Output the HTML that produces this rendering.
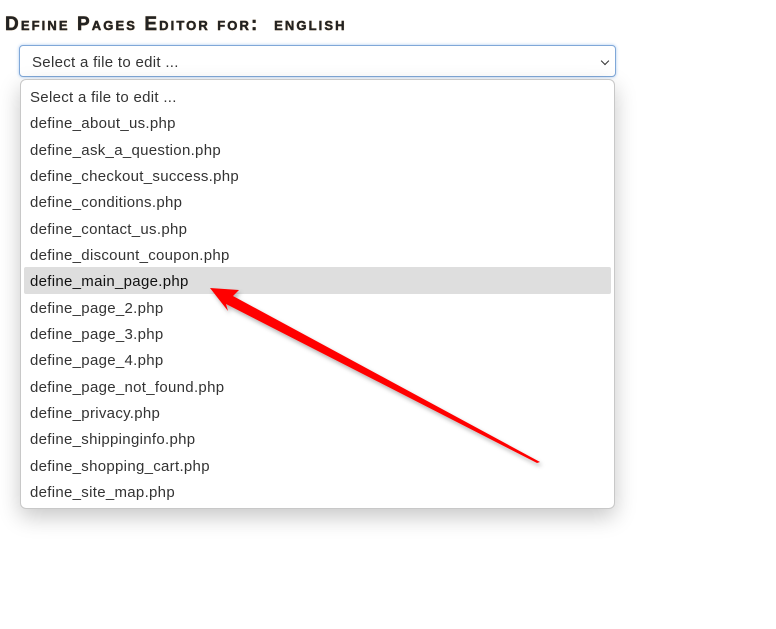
<!DOCTYPE html>
<html><head><style>
body{margin:0;width:776px;height:629px;background:#fff;position:relative;font-family:"Liberation Sans",sans-serif;overflow:hidden}
h1{position:absolute;left:5px;top:14px;margin:0;font-size:19px;font-weight:bold;font-variant:small-caps;letter-spacing:2.1px;color:#222;text-shadow:0 0 1px #e8a040;-webkit-text-stroke:0.4px #222}
.sel{position:absolute;left:19px;top:45px;height:32px;border:1px solid #80a8d8;border-radius:4px;box-shadow:0 0 3px #a8c8f0;background:#fff;font-size:15px;color:#333;line-height:33px;padding-left:12px;box-sizing:border-box;width:597px;letter-spacing:.3px}
.sel:after{content:"";position:absolute;right:7px;top:12px;width:5px;height:5px;border-right:1.5px solid #333;border-bottom:1.5px solid #333;transform:rotate(45deg)}
.list{position:absolute;left:20px;top:79px;width:595px;height:430px;border:1px solid #c8c8c8;border-radius:6px;box-sizing:border-box;background:#fff;box-shadow:0 8px 22px rgba(0,0,0,.22)}
.it{position:absolute;left:9px;font-size:15px;color:#333;height:26px;line-height:28px;letter-spacing:.3px}
.hl{position:absolute;left:3px;top:187px;width:587px;height:27px;background:#dedede;border-radius:2px}
</style></head><body>
<h1>Define Pages Editor for:&nbsp; english</h1>
<div class="sel">Select a file to edit ...</div>
<div class="list">
<div class="hl"></div>
<div class="it" style="top:4px">Select a file to edit ...</div>
<div class="it" style="top:30px">define_about_us.php</div>
<div class="it" style="top:57px">define_ask_a_question.php</div>
<div class="it" style="top:83px">define_checkout_success.php</div>
<div class="it" style="top:109px">define_conditions.php</div>
<div class="it" style="top:136px">define_contact_us.php</div>
<div class="it" style="top:162px">define_discount_coupon.php</div>
<div class="it" style="top:188px;color:#111">define_main_page.php</div>
<div class="it" style="top:215px">define_page_2.php</div>
<div class="it" style="top:241px">define_page_3.php</div>
<div class="it" style="top:267px">define_page_4.php</div>
<div class="it" style="top:294px">define_page_not_found.php</div>
<div class="it" style="top:320px">define_privacy.php</div>
<div class="it" style="top:346px">define_shippinginfo.php</div>
<div class="it" style="top:373px">define_shopping_cart.php</div>
<div class="it" style="top:399px">define_site_map.php</div>
</div>
<svg style="position:absolute;left:0;top:0" width="776" height="629">
<defs><filter id="s"><feDropShadow dx="2" dy="3" stdDeviation="2" flood-color="#000" flood-opacity=".3"/></filter></defs>
<path filter="url(#s)" fill="#f00" d="M210 288 L239 290 L233 296 L540 462 L537 463 L226 304 L228 311 Z"/>
</svg>
</body></html>
